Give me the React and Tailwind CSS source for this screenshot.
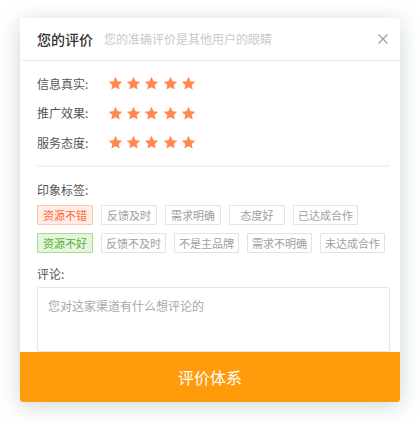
import { useState } from 'react';

const font = { fontFamily: '"Noto Sans CJK SC", "Noto Sans", sans-serif' };

const ratings = ['信息真实:', '推广效果:', '服务态度:'];

const tagRows = [
  [
    { text: '资源不错', tone: 'red' },
    { text: '反馈及时' },
    { text: '需求明确' },
    { text: '态度好' },
    { text: '已达成合作' },
  ],
  [
    { text: '资源不好', tone: 'green' },
    { text: '反馈不及时' },
    { text: '不是主品牌' },
    { text: '需求不明确' },
    { text: '未达成合作' },
  ],
];

const Star = () => (
  <svg viewBox="0 0 24 24" className="w-[15px] h-[15px]">
    <path
      d="M12 1.2l3.3 7 7.5.9-5.6 5.1 1.5 7.5L12 17.9l-6.7 3.8 1.5-7.5L1.2 9.1l7.5-.9z"
      fill="#ff8a4c"
    />
  </svg>
);

const Tag = ({ text, tone }) => {
  const cls =
    tone === 'red'
      ? 'bg-[#ffece5] border-[#fcc7b3] text-[#ff6a3a]'
      : tone === 'green'
      ? 'bg-[#e5f6dc] border-[#a9dc8c] text-[#4fb234]'
      : 'bg-white border-[#e3e3e3] text-[#a0a0a0]';
  return (
    <span
      className={`h-[20px] min-w-[56px] shrink-0 whitespace-nowrap px-[4px] border rounded-[1px] text-[11px] leading-[18px] flex items-center justify-center ${cls}`}
    >
      {text}
    </span>
  );
};

export default function App() {
  const [comment, setComment] = useState('');

  return (
    <div className="w-[420px] h-[424px] bg-white pt-[18px] pl-[20px]" style={font}>
      <div className="w-[380px] h-[384px] bg-white rounded-[3px] overflow-hidden flex flex-col shadow-[0_4px_22px_rgba(70,110,100,0.28)]">
        {/* header */}
        <div className="h-[43px] shrink-0 border-b border-[#ececec] flex items-center pl-[17px] pr-[12px]">
          <span className="text-[14px] font-medium text-[#333]">您的评价</span>
          <span className="ml-[11px] text-[12px] text-[#c9c9c9]">您的准确评价是其他用户的眼睛</span>
          <svg viewBox="0 0 10 10" className="ml-auto w-[10px] h-[10px]">
            <path d="M0.5 0.5L9.5 9.5M9.5 0.5L0.5 9.5" stroke="#9a9a9a" strokeWidth="1.1" />
          </svg>
        </div>

        {/* body */}
        <div className="flex-1 flex flex-col pl-[17px] pr-[10px] pt-[8px] min-h-0">
          {ratings.map(label => (
            <div key={label} className="h-[29.5px] flex items-center">
              <span className="w-[71px] text-[12px] text-[#555]">{label}</span>
              <div className="flex gap-[3.2px]">
                {[0, 1, 2, 3, 4].map(i => (
                  <Star key={i} />
                ))}
              </div>
            </div>
          ))}

          <div className="mt-[7px] h-[2px] bg-[#f2f2f2]" />

          <div className="mt-[13px] text-[12px] leading-[20px] text-[#555]">印象标签:</div>
          <div className="mt-[5px] flex flex-col gap-[8px]">
            {tagRows.map((row, r) => (
              <div key={r} className="flex gap-[8px]">
                {row.map(t => (
                  <Tag key={t.text} {...t} />
                ))}
              </div>
            ))}
          </div>

          <div className="mt-[11px] text-[12px] leading-[20px] text-[#555]">评论:</div>
          <textarea
            value={comment}
            onChange={e => setComment(e.target.value)}
            placeholder="您对这家渠道有什么想评论的"
            className="mt-[3px] flex-1 min-h-0 resize-none border border-[#e6e6e6] rounded-[2px] pl-[10px] pt-[9px] text-[12px] leading-[18px] text-[#333] placeholder:text-[#a8a8a8] outline-none"
            style={font}
          />
        </div>

        {/* submit */}
        <button className="h-[50px] shrink-0 bg-[#ff9a0b] text-white text-[16px] flex items-center justify-center">
          评价体系
        </button>
      </div>
    </div>
  );
}
